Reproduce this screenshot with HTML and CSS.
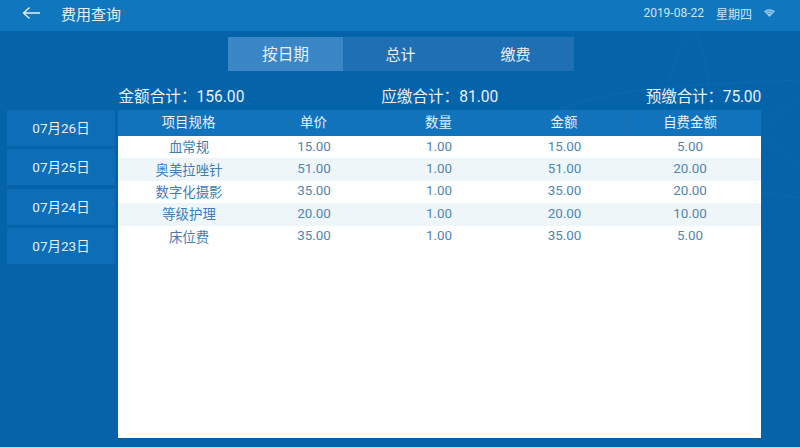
FILE: index.html
```html
<!DOCTYPE html>
<html lang="zh">
<head>
<meta charset="utf-8">
<title>费用查询</title>
<link rel="stylesheet" href="styles.css">
</head>
<body>
<svg class="bg-art" viewBox="0 0 800 447" aria-hidden="true">
  <g fill="none" stroke="#fff" stroke-opacity=".035">
    <path d="M664 110C670 70 680 40 695 31C705 45 708 80 712 110"/>
    <path d="M560 110C620 85 700 85 800 80M761 128 800 98M761 135 800 165M761 192 800 198"/>
  </g>
</svg>
<header class="topbar">
  <svg class="back" viewBox="0 0 18 14" aria-hidden="true"><path d="M18 7H1.5M7.5 1.5 1.5 7l6 5.5" fill="none" stroke="#e4f0f9" stroke-width="1.4"/></svg>
  <span class="title">费用查询</span>
  <span class="date">2019-08-22</span>
  <span class="week">星期四</span>
  <svg class="wifi" viewBox="0 0 14 10" aria-hidden="true"><path d="M0 2.8C4 -.6 10 -.6 14 2.8L7 10Z" fill="#9ccbe9"/><path d="M2.2 4.3C5 2 9 2 11.8 4.3M4.2 6.2C6 5 8 5 9.8 6.2" fill="none" stroke="#1076bd" stroke-width=".8"/></svg>
</header>
<nav class="tabs">
  <a class="tab active">按日期</a>
  <a class="tab">总计</a>
  <a class="tab">缴费</a>
</nav>
<section class="summary">
  <span>金额合计：156.00</span>
  <span class="due">应缴合计：81.00</span>
  <span class="prepaid">预缴合计：75.00</span>
</section>
<main class="content">
  <aside class="dates">
    <div class="date-item">07月26日</div>
    <div class="date-item">07月25日</div>
    <div class="date-item">07月24日</div>
    <div class="date-item">07月23日</div>
  </aside>
  <section class="table">
    <div class="row head"><span>项目规格</span><span>单价</span><span>数量</span><span>金额</span><span>自费金额</span></div>
    <div class="row"><span>血常规</span><span>15.00</span><span>1.00</span><span>15.00</span><span>5.00</span></div>
    <div class="row alt"><span>奥美拉唑针</span><span>51.00</span><span>1.00</span><span>51.00</span><span>20.00</span></div>
    <div class="row"><span>数字化摄影</span><span>35.00</span><span>1.00</span><span>35.00</span><span>20.00</span></div>
    <div class="row alt"><span>等级护理</span><span>20.00</span><span>1.00</span><span>20.00</span><span>10.00</span></div>
    <div class="row"><span>床位费</span><span>35.00</span><span>1.00</span><span>35.00</span><span>5.00</span></div>
  </section>
</main>
</body>
</html>
```
FILE: styles.css
```css
* { box-sizing: border-box; }
html, body { margin: 0; height: 447px; overflow: hidden; }
body {
  position: relative;
  width: 800px;
  background: #0563a9;
  color: #e6f1f9;
  font-family: Roboto, "Noto Sans CJK SC", sans-serif;
  display: flex;
  flex-direction: column;
}
.bg-art { position: absolute; inset: 0; width: 800px; height: 447px; }
.topbar {
  position: relative;
  height: 31px;
  background: #1076bd;
  display: flex;
  align-items: center;
  padding: 0 0 5px 22px;
}
.back { width: 18px; height: 14px; }
.title { margin-left: 21px; font-size: 15px; }
.date { margin-left: auto; font-size: 12px; color: #cfe4f3; }
.week { margin-left: 12px; font-size: 12px; color: #cfe4f3; }
.wifi { width: 11px; height: 8px; margin: 0 25px 0 12px; }
.tabs {
  position: relative;
  margin: 6px 0 0 228px;
  width: 346px;
  height: 34px;
  display: flex;
  background: #1f6fb4;
}
.tab {
  width: 115px;
  display: flex;
  align-items: center;
  justify-content: center;
  padding-bottom: 2px;
  font-size: 15px;
}
.tab.active { background: #3b86c6; font-size: 15.7px; }
.summary {
  position: relative;
  margin: 13px 39px 0 118.5px;
  height: 22px;
  display: grid;
  grid-template-columns: 1fr 1fr 1fr;
  align-items: center;
  font-size: 15.6px;
  white-space: nowrap;
}
.summary .due { text-align: center; }
.summary .prepaid { text-align: right; letter-spacing: -.2px; }
.content {
  position: relative;
  margin: 4px 39px 0 7px;
  height: 328px;
  display: flex;
  gap: 3px;
}
.dates { width: 108px; display: flex; flex-direction: column; gap: 3.3px; }
.date-item {
  height: 36px;
  background: #0d6db6;
  display: flex;
  align-items: center;
  justify-content: center;
  padding: 0 0 2px 0;
  font-size: 13.5px;
}
.table { flex: 1; background: #fff; }
.row {
  height: 22.4px;
  display: grid;
  grid-template-columns: 134px 124px 126px 125px 134px;
  align-items: center;
  text-align: center;
  font-size: 13.4px;
  color: #4f86b3;
  padding-bottom: 2px;
}
.row span:first-child { padding-left: 8px; color: #3f7db2; }
.row span:last-child { padding-right: 8px; }
.row.alt { background: #eff6fa; }
.row.head { height: 26px; background: #1273bd; color: #e6f1f9; padding-bottom: 0; }
.row.head span { height: 22px; line-height: 22px; border-right: 1px solid #1a6fb3; }
.row.head span:last-child { border-right: 0; }
.row.head span:first-child { color: #e6f1f9; }
```
